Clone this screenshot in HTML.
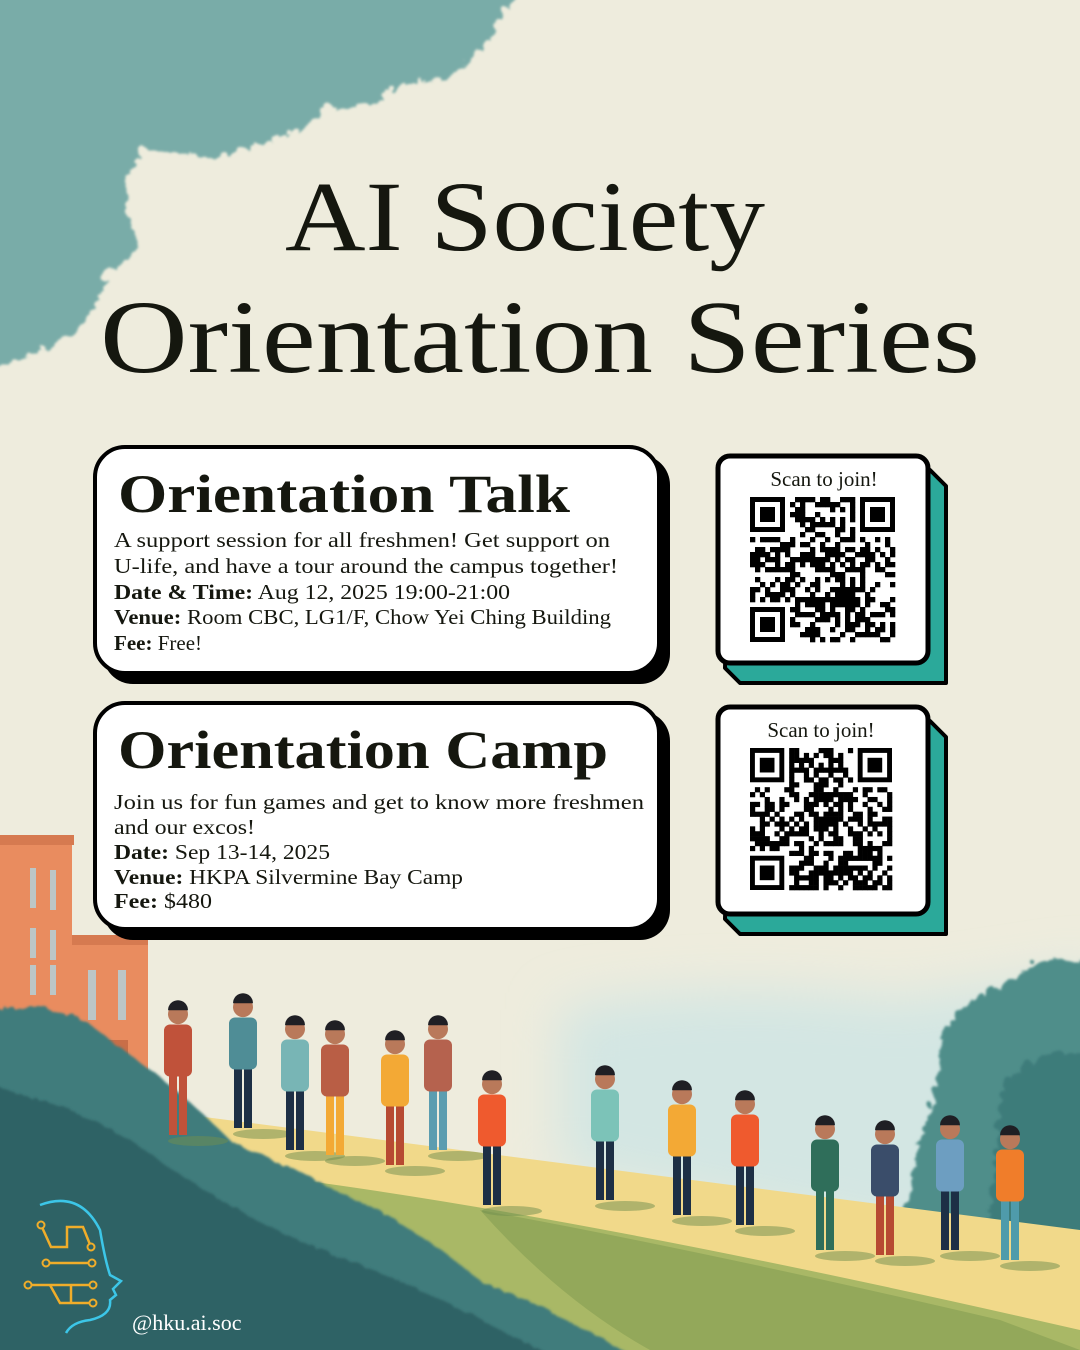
<!DOCTYPE html>
<html><head><meta charset="utf-8"><style>
html,body{margin:0;padding:0}
body{width:1080px;height:1350px;overflow:hidden;background:#eeecdd;position:relative}
svg{position:absolute;left:0;top:0}
</style></head><body>
<svg width="1080" height="1350" viewBox="0 0 1080 1350" xmlns="http://www.w3.org/2000/svg">
<defs>
<filter id="rough" x="-10%" y="-10%" width="120%" height="120%"><feTurbulence baseFrequency="0.06" numOctaves="2" seed="3"/><feDisplacementMap in="SourceGraphic" scale="12"/><feGaussianBlur stdDeviation="1.2"/></filter>
<filter id="blur" x="-20%" y="-20%" width="140%" height="140%"><feGaussianBlur stdDeviation="25"/></filter>
</defs>
<rect width="1080" height="1350" fill="#eeecdd"/>
<!-- top-left tree -->
<path filter="url(#rough)" fill="#79aca8" d="M-30 -30 L525 -30 L500 10 L490 30 L470 55 L440 75 L400 80 L370 100 L330 105 L300 125 L260 140 L215 155 L175 150 L140 145 L125 175 L125 210 L135 245 L110 265 L95 290 L85 320 L55 340 L25 355 L-30 365 Z"/>
<!-- sky haze right -->
<path filter="url(#blur)" d="M560 1010 Q700 980 900 1000 L1100 970 L1100 1280 L560 1170Z" fill="#d3e6e3"/>
<!-- right trees -->
<path filter="url(#rough)" fill="#4f8e8a" d="M940 1030 Q960 990 1000 985 Q1030 950 1060 960 L1100 955 L1100 1300 L900 1260 Q905 1150 930 1100Z"/>
<path filter="url(#rough)" fill="#3d7b7a" d="M1000 1080 Q1040 1040 1100 1050 L1100 1300 L980 1280Z"/>
<!-- building -->
<rect x="0" y="840" width="72" height="220" fill="#e98c5f"/>
<rect x="0" y="835" width="74" height="10" fill="#d67a50"/>
<rect x="72" y="940" width="76" height="150" fill="#e98c5f"/>
<rect x="72" y="935" width="76" height="10" fill="#d67a50"/>
<g fill="#bcc6c6"><rect x="30" y="868" width="6" height="40"/><rect x="50" y="870" width="6" height="40"/><rect x="30" y="928" width="6" height="30"/><rect x="50" y="930" width="6" height="30"/><rect x="30" y="965" width="6" height="30"/><rect x="50" y="965" width="6" height="30"/><rect x="88" y="970" width="8" height="50"/><rect x="118" y="970" width="8" height="50"/></g>
<rect x="88" y="1040" width="40" height="60" fill="#c96e48"/>
<!-- path & grass -->
<path d="M150 1110 L1080 1230 L1080 1350 L560 1350 Z" fill="#f1d98a"/>
<path d="M300 1180 Q600 1220 1080 1330 L1080 1350 L520 1350 Q400 1280 300 1180Z" fill="#a9b866"/>
<path d="M480 1210 Q700 1250 1000 1320 L1080 1350 L650 1350 Q560 1300 480 1210Z" fill="#93a85a"/>
<!-- left dark hill -->
<path filter="url(#rough)" fill="#3f7b7b" d="M-30 1010 Q60 990 110 1040 Q170 1080 230 1140 Q300 1170 360 1200 Q420 1230 480 1280 Q560 1310 640 1360 L-30 1370Z"/>
<path filter="url(#rough)" fill="#2e6265" d="M-30 1080 Q80 1100 160 1160 Q260 1230 380 1270 Q470 1310 560 1360 L-30 1370Z"/>
<!-- people -->
<g id="people">
</g>
<!-- card 1 -->
<rect x="103" y="455" width="567" height="229" rx="30" fill="#000"/>
<rect x="95" y="447" width="564" height="226" rx="30" fill="#fff" stroke="#000" stroke-width="4"/>
<!-- card 2 -->
<rect x="103" y="711" width="567" height="229" rx="30" fill="#000"/>
<rect x="95" y="703" width="564" height="226" rx="30" fill="#fff" stroke="#000" stroke-width="4"/>
<!-- qr cards -->
<g>
<path d="M730 470 L930 470 L946 486 L946 683 L740 683 L725 668Z" fill="#2ba99a" stroke="#000" stroke-width="4" stroke-linejoin="round"/>
<rect x="718" y="456" width="210" height="207" rx="12" fill="#fff" stroke="#000" stroke-width="5"/>
<path d="M730 721 L930 721 L946 737 L946 934 L740 934 L725 919Z" fill="#2ba99a" stroke="#000" stroke-width="4" stroke-linejoin="round"/>
<rect x="718" y="707" width="210" height="207" rx="12" fill="#fff" stroke="#000" stroke-width="5"/>
</g>
<g id="qr1"></g><g id="qr2"></g>
<!-- titles -->
<g font-family="Liberation Serif, serif" fill="#15170f">
<text x="525" y="250" font-size="100" text-anchor="middle" textLength="480" lengthAdjust="spacingAndGlyphs">AI Society</text>
<text x="540" y="372" font-size="104" text-anchor="middle" textLength="880" lengthAdjust="spacingAndGlyphs">Orientation Series</text>
<text x="118" y="512" font-size="54" font-weight="bold" textLength="452" lengthAdjust="spacingAndGlyphs">Orientation Talk</text>
<text x="118" y="768" font-size="54" font-weight="bold" textLength="490" lengthAdjust="spacingAndGlyphs">Orientation Camp</text>
<g font-size="21">
<text x="114" y="547" textLength="496" lengthAdjust="spacingAndGlyphs">A support session for all freshmen! Get support on</text>
<text x="114" y="573" textLength="504" lengthAdjust="spacingAndGlyphs">U-life, and have a tour around the campus together!</text>
<text x="114" y="599" textLength="396" lengthAdjust="spacingAndGlyphs"><tspan font-weight="bold">Date &amp; Time:</tspan> Aug 12, 2025 19:00-21:00</text>
<text x="114" y="624" textLength="497" lengthAdjust="spacingAndGlyphs"><tspan font-weight="bold">Venue:</tspan> Room CBC, LG1/F, Chow Yei Ching Building</text>
<text x="114" y="650"><tspan font-weight="bold">Fee:</tspan> Free!</text>
<text x="114" y="809" textLength="530" lengthAdjust="spacingAndGlyphs">Join us for fun games and get to know more freshmen</text>
<text x="114" y="834" textLength="141" lengthAdjust="spacingAndGlyphs">and our excos!</text>
<text x="114" y="859" textLength="216" lengthAdjust="spacingAndGlyphs"><tspan font-weight="bold">Date:</tspan> Sep 13-14, 2025</text>
<text x="114" y="884" textLength="349" lengthAdjust="spacingAndGlyphs"><tspan font-weight="bold">Venue:</tspan> HKPA Silvermine Bay Camp</text>
<text x="114" y="908" textLength="98" lengthAdjust="spacingAndGlyphs"><tspan font-weight="bold">Fee:</tspan> $480</text>
<text x="824" y="486" text-anchor="middle" font-size="21">Scan to join!</text>
<text x="821" y="737" text-anchor="middle" font-size="21">Scan to join!</text>
</g>
</g>
<!-- logo -->
<g fill="none" stroke-width="2.5">
<path d="M40 1205 Q80 1190 100 1230 Q105 1260 110 1275 L121 1281 L113 1289 L116 1295 L110 1300 Q112 1315 90 1320 Q72 1322 66 1333" stroke="#3cc6e8"/>
<g stroke="#f0ad2a"><path d="M41 1225 L51 1247 L67 1247 L67 1227 L83 1227 L91 1247"/><path d="M46 1263 L92 1263"/><path d="M28 1285 L93 1285"/><path d="M50 1285 L60 1303 L93 1303"/><path d="M71 1285 L71 1303"/></g>
<g fill="#2e6265" stroke="#f0ad2a" stroke-width="2"><circle cx="41" cy="1225" r="3.5"/><circle cx="91" cy="1247" r="3.5"/><circle cx="46" cy="1263" r="3.5"/><circle cx="92" cy="1263" r="3.5"/><circle cx="28" cy="1285" r="3.5"/><circle cx="93" cy="1285" r="3.5"/><circle cx="93" cy="1303" r="3.5"/></g>
</g>
<text x="132" y="1330" font-family="Liberation Serif, serif" font-size="22" fill="#fff">@hku.ai.soc</text>
</svg>
<script>
(function(){
var NS="http://www.w3.org/2000/svg";
function qr(id,x0,y0,size,seed){
 var g=document.getElementById(id),n=29,c=size/n,s=seed;
 function r(){s=(s*16807)%2147483647;return s/2147483647;}
 function rect(x,y,w,h,f){var e=document.createElementNS(NS,"rect");e.setAttribute("x",x);e.setAttribute("y",y);e.setAttribute("width",w);e.setAttribute("height",h);e.setAttribute("fill",f);g.appendChild(e);}
 function finder(i,j){rect(x0+i*c,y0+j*c,7*c,7*c,"#000");rect(x0+(i+1)*c,y0+(j+1)*c,5*c,5*c,"#fff");rect(x0+(i+2)*c,y0+(j+2)*c,3*c,3*c,"#000");}
 for(var i=0;i<n;i++)for(var j=0;j<n;j++){
  if((i<8&&j<8)||(i>n-9&&j<8)||(i<8&&j>n-9))continue;
  if(r()<0.52)rect(x0+i*c,y0+j*c,c+0.3,c+0.3,"#000");}
 finder(0,0);finder(n-7,0);finder(0,n-7);
}
qr("qr1",750,497,145,12345);
qr("qr2",750,748,142,67891);
var p=document.getElementById("people");
var ppl=[[178,1135,"#c0523a","#c0523a"],[243,1128,"#4f8d96","#1d2f45"],[295,1150,"#78b5b5","#1d2f45"],[335,1155,"#b95e45","#f3a935"],[395,1165,"#f3a935","#b74a32"],[438,1150,"#b5624e","#5b9db0"],[492,1205,"#ef5a2e","#1d2f45"],[605,1200,"#7cc3b8","#1d2f45"],[682,1215,"#f3a935","#1d2f45"],[745,1225,"#ef5a2e","#1d2f45"],[825,1250,"#2f6e5a","#2f6e5a"],[885,1255,"#3a4d6a","#b74a32"],[950,1250,"#6d9ec1","#1d2f45"],[1010,1260,"#f07d2a","#4f9bab"]];
ppl.forEach(function(q){
 var x=q[0],y=q[1],h=130;
 var s='<rect x="'+(x-9)+'" y="'+(y-h*0.48)+'" width="8" height="'+(h*0.48)+'" fill="'+q[3]+'"/>'+
 '<rect x="'+(x+1)+'" y="'+(y-h*0.48)+'" width="8" height="'+(h*0.48)+'" fill="'+q[3]+'"/>'+
 '<rect x="'+(x-14)+'" y="'+(y-h*0.85)+'" width="28" height="'+(h*0.4)+'" rx="6" fill="'+q[2]+'"/>'+
 '<circle cx="'+x+'" cy="'+(y-h*0.93)+'" r="10" fill="#b9795a"/>'+
 '<path d="M'+(x-10)+' '+(y-h*0.96)+' a10 10 0 0 1 20 0z" fill="#1f1f24"/>'+
 '<ellipse cx="'+(x+20)+'" cy="'+(y+6)+'" rx="30" ry="5" fill="#6f8d4e" opacity="0.5"/>';
 p.insertAdjacentHTML("beforeend",s);
});
})();
</script>
</body></html>
